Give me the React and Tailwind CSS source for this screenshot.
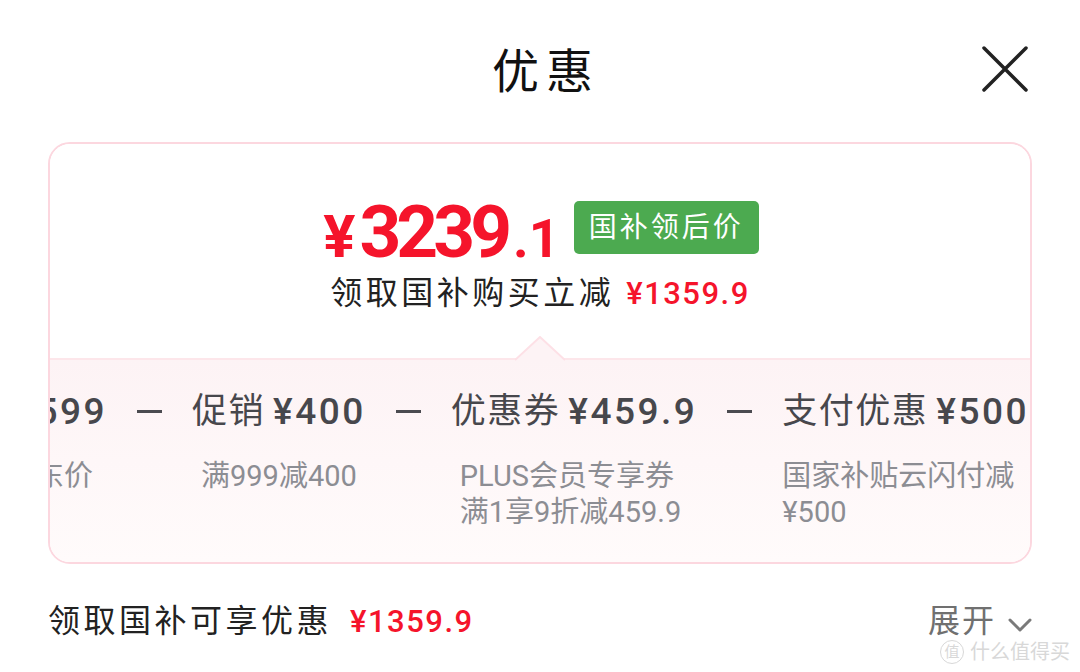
import React from "react";

const SANS = { fontFamily: "Roboto, 'Noto Sans CJK SC', sans-serif" };

function Dash() {
  return <div className="w-[25px] h-[3px] bg-[#4b4b50] mx-[30px] mt-[22px] shrink-0" />;
}

function Item({ label, amount, lines, className = "", descClass = "" }) {
  return (
    <div className={"flex flex-col shrink-0 " + className}>
      <div className="flex items-center h-[46px] text-[#47474c]">
        {label && <span className="text-[35px] leading-none tracking-[1.5px] mr-[8px]">{label}</span>}
        <span className="text-[37px] leading-none font-medium tracking-[2.5px]">{amount}</span>
      </div>
      <div className={"mt-[24px] text-[29px] leading-[36px] text-[#8c8d93] " + descClass}>
        {lines.map((l) => (
          <div key={l}>{l}</div>
        ))}
      </div>
    </div>
  );
}

export default function App() {
  return (
    <div className="w-[1080px] h-[672px] bg-white relative overflow-hidden" style={SANS}>
      {/* header */}
      <div className="h-[142px] flex items-center justify-between pl-[48px] pr-[50px]">
        <div className="w-[50px]" />
        <div className="text-[47px] leading-none text-[#111] tracking-[7px] pl-[14px]">优惠</div>
        <svg width="50" height="50" viewBox="0 0 50 50" className="mt-[-4px]">
          <path d="M4 4 L46 46 M46 4 L4 46" stroke="#222" strokeWidth="3.5" strokeLinecap="round" />
        </svg>
      </div>

      {/* summary card */}
      <div className="mx-[48px] h-[422px] border-2 border-[#fcd7df] rounded-[22px] overflow-hidden flex flex-col">
        <div className="h-[214px] shrink-0 flex flex-col items-center bg-white">
          <div className="flex items-center mt-[52px] pl-[2px]">
            <div className="flex items-baseline text-[#f5142b] font-bold leading-none">
              <span className="text-[60px] mr-[4px]">¥</span>
              <span className="text-[73px] tracking-[-5px]">3239</span>
              <span className="text-[54px] ml-[6px]">.1</span>
            </div>
            <div className="ml-[14px] mt-[-10px] h-[53px] px-[15px] rounded-[5px] bg-[#4caa50] text-white text-[28px] tracking-[3px] flex items-center">
              国补领后价
            </div>
          </div>
          <div className="flex items-center mt-[8px] leading-none">
            <span className="text-[32px] text-[#222] tracking-[3.5px]">领取国补购买立减</span>
            <span className="ml-[12px] text-[31px] font-medium text-[#f5142b] tracking-[1.5px]">¥1359.9</span>
          </div>
        </div>

        <div className="relative flex-1 border-t-2 border-[#fde6ea] bg-gradient-to-b from-[#fdf3f5] to-[#fffbfb]">
          {/* pointer notch */}
          <svg width="50" height="26" viewBox="0 0 50 26" className="absolute left-[465px] top-[-24px]">
            <path d="M0 24 L25 1 L50 24" fill="#fdf3f5" stroke="#fde0e6" strokeWidth="2" />
          </svg>

          <div className="flex ml-[-57px] mt-[28px]">
            <Item amount="¥4599" lines={["京东价"]} className="w-[114px] items-end" descClass="pr-[14px]" />
            <Dash />
            <Item label="促销" amount="¥400" lines={["满999减400"]} descClass="pl-[9px]" />
            <Dash />
            <Item label="优惠券" amount="¥459.9" lines={["PLUS会员专享券", "满1享9折减459.9"]} descClass="pl-[9px]" />
            <Dash />
            <Item label="支付优惠" amount="¥500" lines={["国家补贴云闪付减", "¥500"]} />
          </div>
        </div>
      </div>

      {/* footer line */}
      <div className="flex items-center justify-between px-[48px] mt-[41px] leading-none">
        <div className="flex items-center">
          <span className="text-[32px] text-[#222] tracking-[3.5px]">领取国补可享优惠</span>
          <span className="ml-[18px] text-[31px] font-medium text-[#f5142b] tracking-[1.5px]">¥1359.9</span>
        </div>
        <div className="flex items-center text-[#707070]">
          <span className="text-[32px] tracking-[2px]">展开</span>
          <svg width="24" height="16" viewBox="0 0 24 16" className="ml-[12px] mt-[8px]">
            <path d="M2 3 L12 13 L22 3" fill="none" stroke="#7a7a7a" strokeWidth="3" strokeLinecap="round" strokeLinejoin="round" />
          </svg>
        </div>
      </div>

      <div className="absolute right-[10px] bottom-[8px] flex items-center text-[#d8d8d8] text-[20px] leading-none">
        <span className="w-[24px] h-[24px] rounded-full border border-[#d8d8d8] text-[15px] flex items-center justify-center mr-[6px]">值</span>
        <span>什么值得买</span>
      </div>
    </div>
  );
}
